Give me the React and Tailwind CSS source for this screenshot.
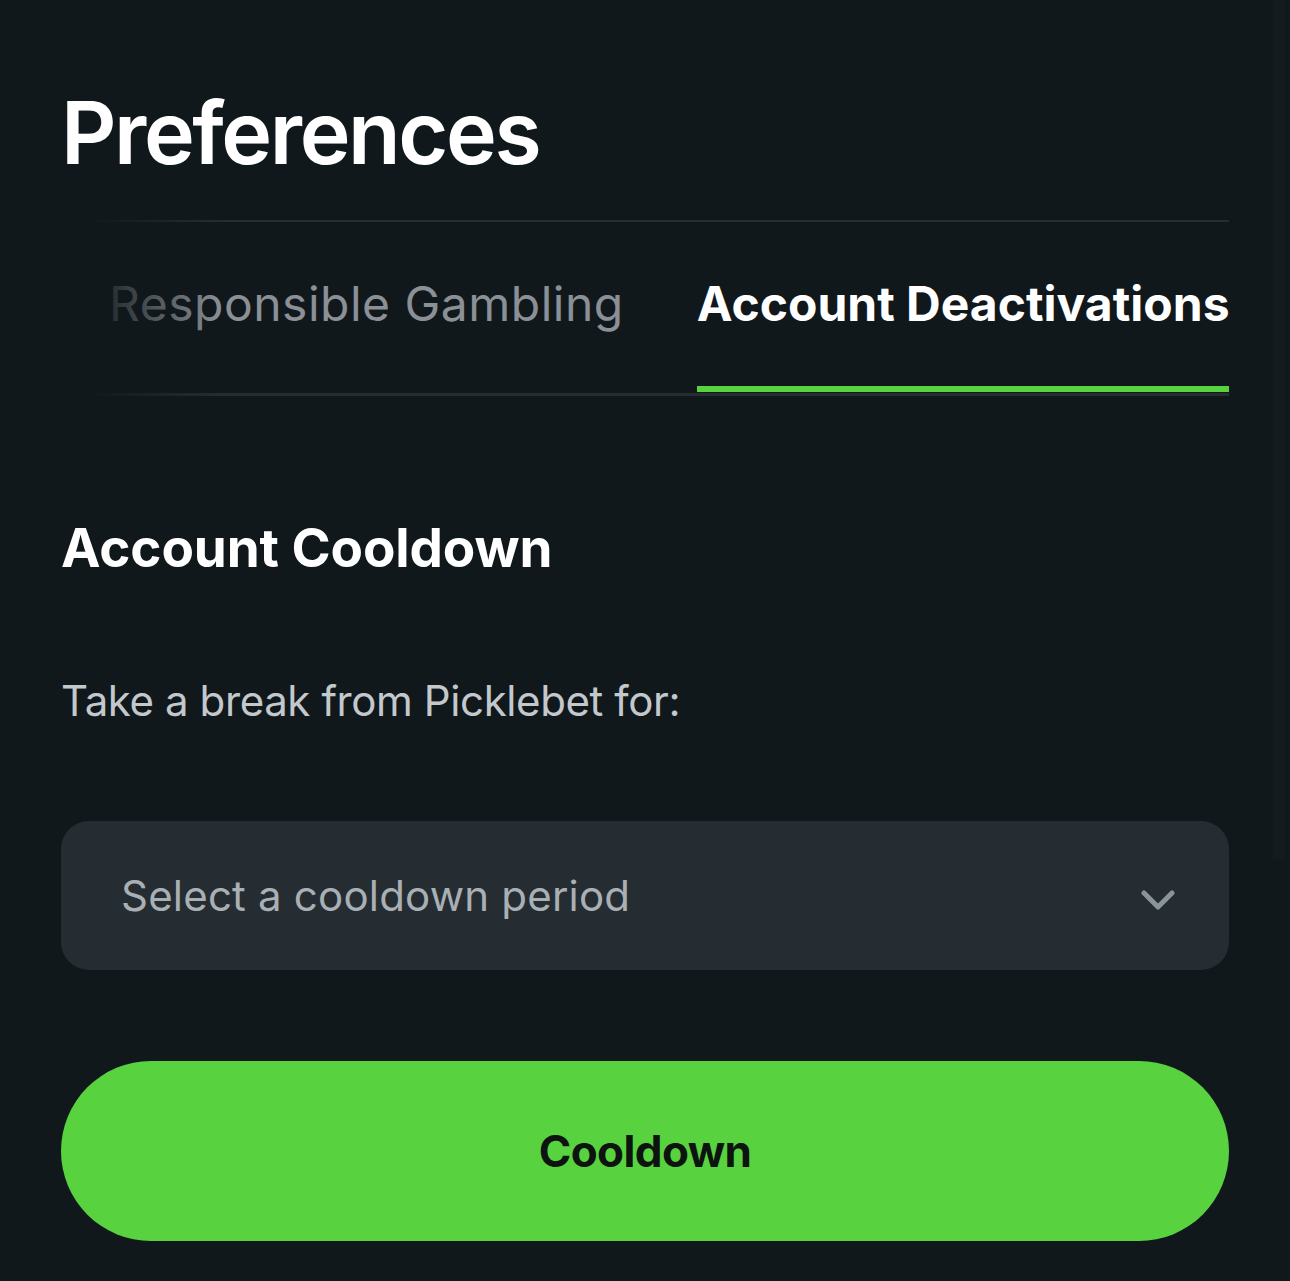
import { useState } from 'react';

const font = { fontFamily: 'Inter, "Noto Sans", sans-serif' };

export default function App() {
    const [tab, setTab] = useState('deactivations');
    const [period, setPeriod] = useState('');

    const tabs = [
        { id: 'gambling', name: 'Responsible Gambling' },
        { id: 'deactivations', name: 'Account Deactivations' }
    ];

    return (
        <div className="relative min-h-[1281px] w-full bg-[#11181c] font-['Inter',sans-serif] overflow-hidden">
            {/* faint scrollbar */}
            <div className="absolute right-[5px] top-0 h-[860px] w-[12px] bg-[#141b1f]" />

            <div className="px-[61px] pt-[78px]">
                <h1 className="text-[86px] font-semibold leading-[110px] tracking-[-2.4px] text-white">
                    Preferences
                </h1>

                {/* Tabs */}
                <div className="relative mt-[32px]">
                    <div className="overflow-hidden border-t-2 border-b-[3px] border-[#262c31]">
                        <div className="flex gap-[73px] pl-[48px]">
                            {tabs.map(t => (
                                <button
                                    key={t.id}
                                    type="button"
                                    onClick={() => setTab(t.id)}
                                    className={`relative h-[171px] shrink-0 whitespace-nowrap pb-[8px] text-[48px] leading-none ${
                                        tab === t.id
                                            ? 'font-bold tracking-[0px] text-white'
                                            : 'font-normal tracking-[0.5px] text-[#8a9096]'
                                    }`}
                                >
                                    {t.name}
                                    {tab === t.id && (
                                        <span className="absolute left-0 right-0 bottom-[1px] h-[6px] bg-[#58d33f]" />
                                    )}
                                </button>
                            ))}
                        </div>
                    </div>
                    <div className="pointer-events-none absolute inset-y-0 left-0 w-[160px] bg-gradient-to-r from-[#11181c] from-[15%] to-transparent" />
                </div>

                {/* Cooldown section */}
                <h2 className="mt-[117px] text-[53px] font-bold leading-[70px] tracking-[-0.1px] text-white">
                    Account Cooldown
                </h2>

                <p className="mt-[88px] text-[42px] leading-[60px] tracking-[-0.4px] text-[#c3c8cc]">
                    Take a break from Picklebet for:
                </p>

                <div className="relative mt-[90px] h-[149px] rounded-[28px] bg-[#262d32]">
                    <select
                        value={period}
                        onChange={(e) => setPeriod(e.target.value)}
                        className="h-full w-full appearance-none bg-transparent pl-[60px] pr-[120px] text-[42px] tracking-[0.2px] text-[#a9b0b5] outline-none"
                        style={font}
                    >
                        <option value="">Select a cooldown period</option>
                        <option value="24h">24 hours</option>
                        <option value="7d">7 days</option>
                        <option value="30d">30 days</option>
                    </select>
                    <svg
                        className="pointer-events-none absolute right-[54px] top-[68px]"
                        width="34"
                        height="22"
                        viewBox="0 0 34 22"
                        fill="none"
                    >
                        <path d="M3 4l14 14L31 4" stroke="#8a949b" strokeWidth="5" strokeLinecap="round" strokeLinejoin="round" />
                    </svg>
                </div>

                <button
                    type="button"
                    className="mt-[91px] h-[180px] w-full rounded-full bg-[#58d33f] text-[44px] font-bold tracking-[-0.6px] text-[#0d1410]"
                >
                    Cooldown
                </button>
            </div>
        </div>
    );
}
